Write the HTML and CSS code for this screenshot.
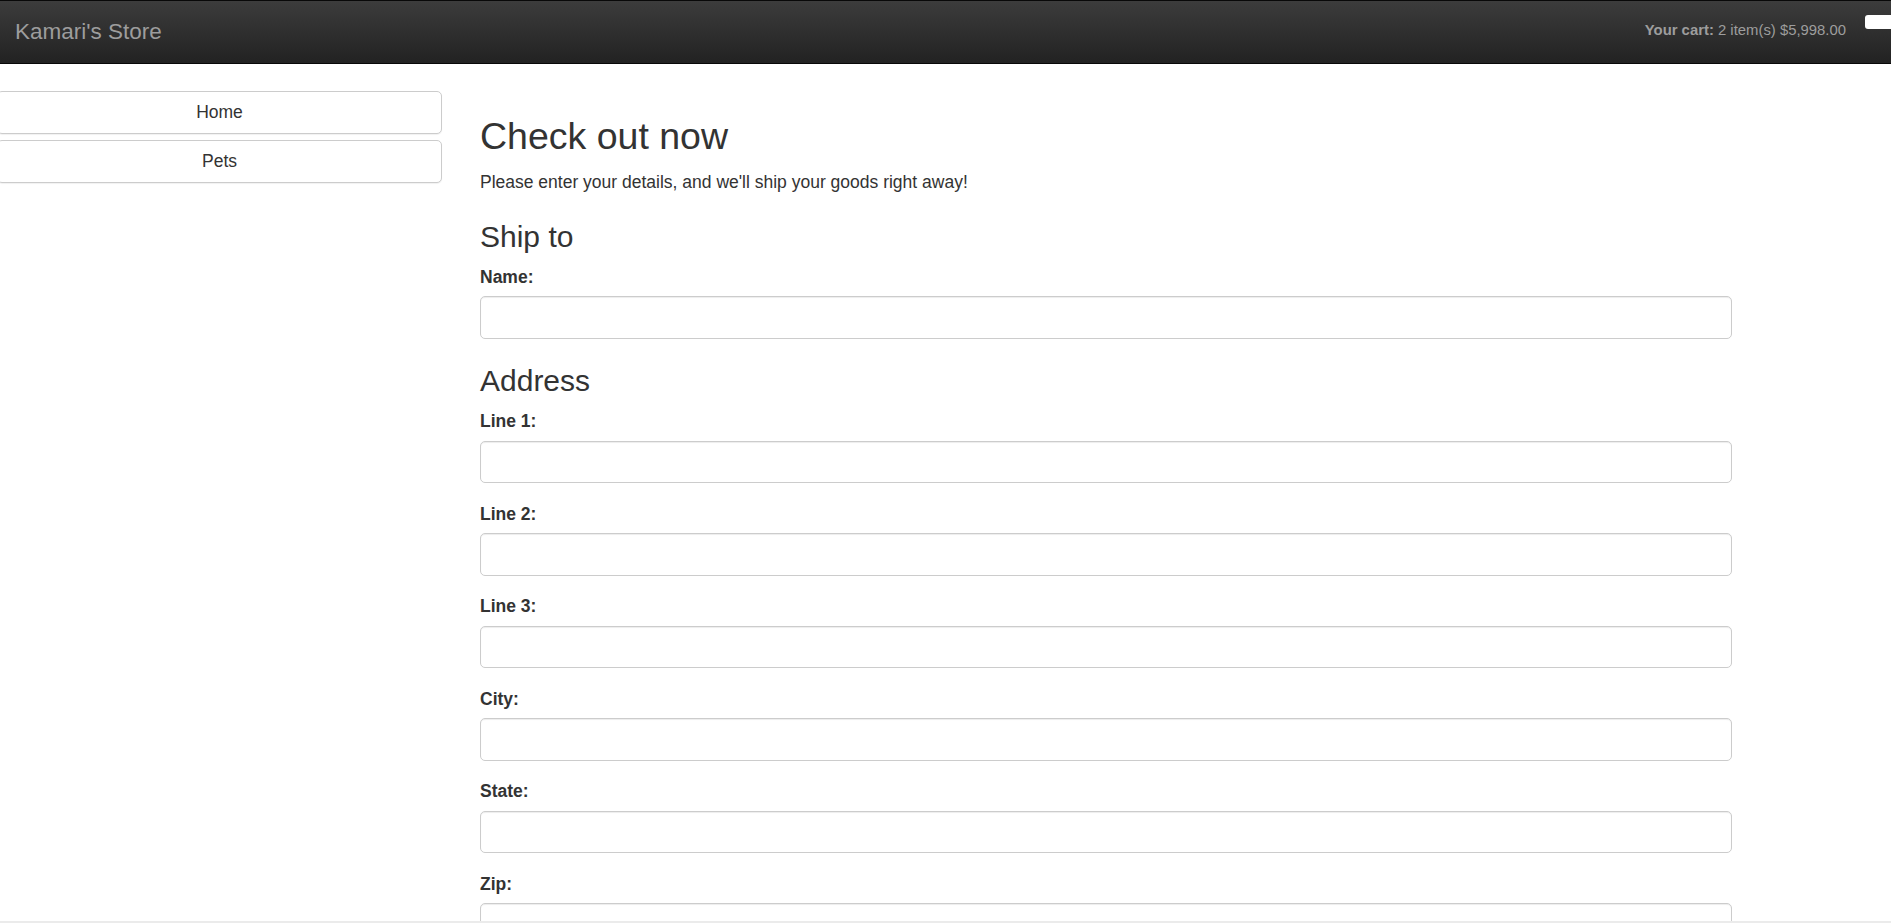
FILE: index.html
```html
<!DOCTYPE html>
<html lang="en">
<head>
<meta charset="utf-8">
<title>Kamari's Store</title>
<link rel="stylesheet" href="styles.css">
</head>
<body>
<header class="navbar">
  <a class="brand" href="#">Kamari's Store</a>
  <div class="cart">
    <small class="cart-text"><b>Your cart:</b> 2 item(s) $5,998.00</small>
    <a class="cart-btn" href="#"></a>
  </div>
</header>
<div class="layout">
  <nav class="sidebar">
    <a class="nav-btn" href="#">Home</a>
    <a class="nav-btn" href="#">Pets</a>
  </nav>
  <main class="main">
    <h2 class="title">Check out now</h2>
    <p class="intro">Please enter your details, and we'll ship your goods right away!</p>
    <form class="form">
      <h3 class="section">Ship to</h3>
      <div class="form-group">
        <label class="label">Name:</label>
        <input class="input" type="text">
      </div>
      <h3 class="section">Address</h3>
      <div class="form-group">
        <label class="label">Line 1:</label>
        <input class="input" type="text">
      </div>
      <div class="form-group">
        <label class="label">Line 2:</label>
        <input class="input" type="text">
      </div>
      <div class="form-group">
        <label class="label">Line 3:</label>
        <input class="input" type="text">
      </div>
      <div class="form-group">
        <label class="label">City:</label>
        <input class="input" type="text">
      </div>
      <div class="form-group">
        <label class="label">State:</label>
        <input class="input" type="text">
      </div>
      <div class="form-group">
        <label class="label">Zip:</label>
        <input class="input" type="text">
      </div>
    </form>
  </main>
</div>
<div class="hscroll"></div>
</body>
</html>
```
FILE: styles.css
```css
html, body {
  margin: 0;
  padding: 0;
}
body {
  font-family: "Liberation Sans", Arial, Helvetica, sans-serif;
  font-size: 17.5px;
  line-height: 1.42857;
  color: #333;
  background: #fff;
  overflow-x: hidden;
}
.navbar {
  display: flex;
  justify-content: space-between;
  align-items: flex-start;
  height: 62px;
  border-top: 1px solid #080808;
  border-bottom: 1px solid #080808;
  background: linear-gradient(to bottom, #3c3c3c 0%, #222 100%);
  margin-bottom: 27px;
  overflow: hidden;
}
.brand {
  display: block;
  padding: 18px 0 0 15px;
  font-size: 22.5px;
  line-height: 25px;
  color: #9d9d9d;
  text-decoration: none;
}
.cart {
  display: flex;
  align-items: flex-start;
  margin-right: -14px;
}
.cart-text {
  display: block;
  margin-top: 19px;
  font-size: 14.875px;
  line-height: 20px;
  color: #9d9d9d;
}
.cart-btn {
  display: block;
  width: 40px;
  height: 14px;
  margin: 14px 0 0 19px;
  background: #fff;
  border-radius: 3px;
}
.layout {
  display: grid;
  grid-template-columns: 445px 1252px;
  column-gap: 38px;
  margin-left: -3px;
}
.sidebar {
  display: flex;
  flex-direction: column;
  gap: 6px;
}
.nav-btn {
  display: block;
  height: 41px;
  line-height: 41px;
  text-align: center;
  color: #333;
  text-decoration: none;
  background: #fff;
  border: 1px solid #ccc;
  border-radius: 5px;
  box-shadow: 0 1px 1px rgba(0, 0, 0, 0.06);
}
.main {
  min-width: 0;
}
.title {
  margin: 25px 0 12.5px;
  font-size: 37.5px;
  line-height: 1.1;
  font-weight: normal;
}
.intro {
  margin: 0 0 12.5px;
}
.form {
  margin: 0;
}
.section {
  margin: 25px 0 12.5px;
  font-size: 30px;
  line-height: 1.1;
  font-weight: normal;
}
.form-group {
  margin-bottom: 18.75px;
}
.label {
  display: inline-block;
  margin-bottom: 6.25px;
  font-weight: bold;
}
.input {
  display: block;
  box-sizing: border-box;
  width: 100%;
  height: 42.5px;
  margin: 0;
  padding: 7.5px 15px;
  font: inherit;
  color: #555;
  background: #fff;
  border: 1px solid #ccc;
  border-radius: 5px;
  box-shadow: inset 0 1px 1px rgba(0, 0, 0, 0.075);
}
.hscroll {
  position: fixed;
  left: 0;
  right: 0;
  bottom: 0;
  height: 2px;
  background: #ebebeb;
}
```
